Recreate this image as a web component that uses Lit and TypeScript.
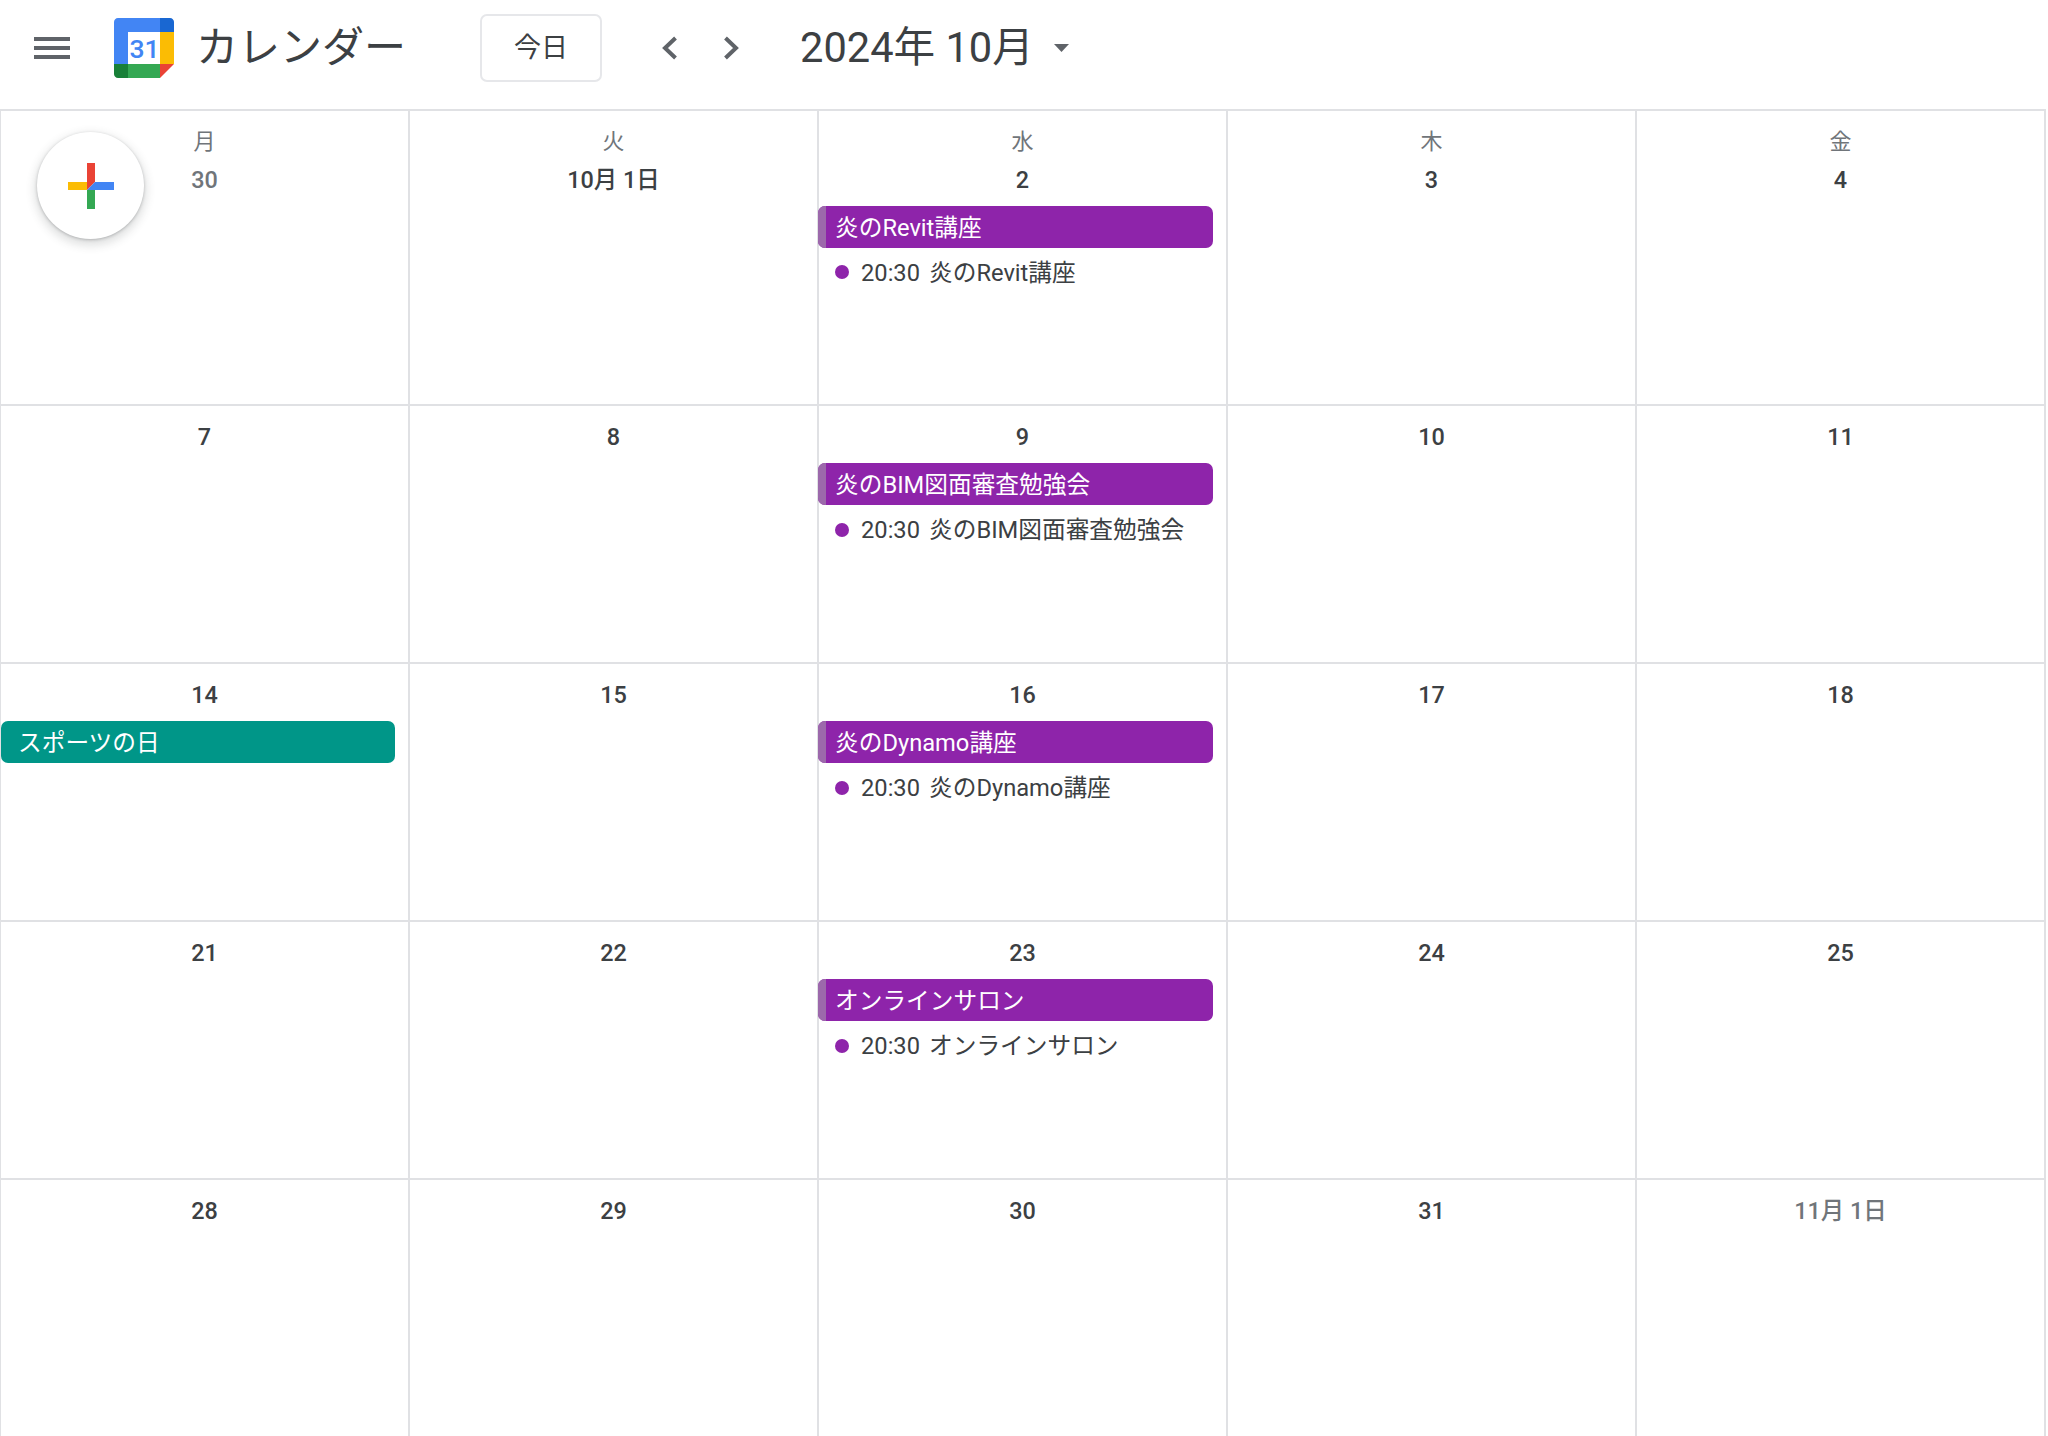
import { LitElement, html, css } from "lit";
import { customElement } from "lit/decorators.js";

type Day = { label: string; tone?: "muted"; bar?: string; holiday?: string };

const rows: Day[][] = [
  [{ label: "30", tone: "muted" }, { label: "10月 1日" }, { label: "2", bar: "炎のRevit講座" }, { label: "3" }, { label: "4" }],
  [{ label: "7" }, { label: "8" }, { label: "9", bar: "炎のBIM図面審査勉強会" }, { label: "10" }, { label: "11" }],
  [{ label: "14", holiday: "スポーツの日" }, { label: "15" }, { label: "16", bar: "炎のDynamo講座" }, { label: "17" }, { label: "18" }],
  [{ label: "21" }, { label: "22" }, { label: "23", bar: "オンラインサロン" }, { label: "24" }, { label: "25" }],
  [{ label: "28" }, { label: "29" }, { label: "30" }, { label: "31" }, { label: "11月 1日", tone: "muted" }],
];
const dow = ["月", "火", "水", "木", "金"];

@customElement("app-root")
export class AppRoot extends LitElement {
  static styles = css`
    :host { display: block; width: 2048px; height: 1436px; overflow: hidden; background: #fff; position: relative; font-family: Roboto, 'Noto Sans CJK JP', sans-serif; color: #3c4043; }
    .top { height: 109px; display: flex; align-items: center; box-sizing: border-box; padding: 0 0 14px 34px; }
    .menu { width: 36px; height: 36px; display: block; }
    .logo { width: 60px; height: 60px; margin-left: 44px; display: block; }
    .brand { font-size: 42px; line-height: 48px; margin-left: 22px; width: 245px; white-space: nowrap; }
    .today { width: 122px; height: 68px; box-sizing: border-box; border: 2px solid #e6e7ea; border-radius: 7px; display: flex; align-items: center; justify-content: center; font-size: 27px; padding-bottom: 4px; margin-left: 39px; }
    .nav { display: block; width: 30px; height: 30px; }
    .prev { margin-left: 53px; }
    .next { margin-left: 31px; }
    .period { font-size: 41.6px; line-height: 48px; margin-left: 54px; white-space: nowrap; }
    .caret { display: block; width: 15px; height: 8px; margin-left: 20px; }
    .grid { display: grid; grid-template-columns: repeat(5, 409px); grid-template-rows: 295px 258px 258px 258px 262px; border-top: 2px solid #e0e1e4; border-left: 1px solid #e0e1e4; width: 2046px; box-sizing: border-box; }
    .cell { border-right: 2px solid #e0e1e4; border-bottom: 2px solid #e0e1e4; box-sizing: border-box; display: flex; flex-direction: column; padding-top: 14.5px; min-width: 0; }
    .cell.first { padding-top: 17px; }
    .dow { font-size: 22px; line-height: 28px; text-align: center; color: #70757a; margin-bottom: 7.5px; }
    .num { font-size: 23.4px; line-height: 32px; text-align: center; font-weight: 500; }
    .num.muted { color: #70757a; }
    .bar { height: 42px; margin: 10.5px 13px 0 0; border-radius: 7px; color: #fff; font-size: 23.7px; line-height: 44px; box-sizing: border-box; padding-left: 17px; position: relative; overflow: hidden; white-space: nowrap; }
    .first .bar { margin-top: 10px; }
    .bar.purple { background: #8e24aa; margin-left: -1px; }
    .bar.purple::before { content: ""; position: absolute; left: 0; top: 0; bottom: 0; width: 8px; background: #9c69ab; }
    .bar.green { background: #009688; }
    .timed { display: flex; align-items: center; height: 46px; font-size: 23.7px; padding-left: 16px; white-space: nowrap; }
    .dot { width: 14px; height: 14px; border-radius: 50%; background: #8e24aa; margin: 3px 12px 0 0; flex: none; }
    .time { margin-right: 9px; }
    .fab { position: absolute; left: 37px; top: 132px; width: 107px; height: 107px; border-radius: 50%; background: #fff; box-shadow: 0 1px 3px rgba(60,64,67,.3), 0 4px 8px 3px rgba(60,64,67,.15); display: flex; align-items: center; justify-content: center; }
    .fab svg { width: 46px; height: 46px; display: block; }
  `;

  private logo() {
    return html`<svg class="logo" viewBox="0 0 60 60" aria-hidden="true">
      <path d="M14 46V14h32v32z" fill="#fff"/>
      <path d="M46 60l14-14H46z" fill="#ea4335"/>
      <path d="M60 14H46v32h14z" fill="#fbbc04"/>
      <path d="M46 46H14v14h32z" fill="#34a853"/>
      <path d="M0 46v10c0 2.2 1.8 4 4 4h10V46z" fill="#188038"/>
      <path d="M60 14V4c0-2.2-1.8-4-4-4H46v14z" fill="#1967d2"/>
      <path d="M46 0H4C1.8 0 0 1.8 0 4v42h14V14h32z" fill="#4285f4"/>
      <text x="30.5" y="40" text-anchor="middle" font-size="26.5" font-weight="500" fill="#4285f4" font-family="Roboto, sans-serif">31</text>
    </svg>`;
  }

  private cell(d: Day, r: number, c: number) {
    return html`<div class="cell ${r === 0 ? "first" : ""}">
      ${r === 0 ? html`<div class="dow">${dow[c]}</div>` : ""}
      <div class="num ${d.tone === "muted" ? "muted" : ""}">${d.label}</div>
      ${d.holiday ? html`<div class="bar green">${d.holiday}</div>` : ""}
      ${d.bar ? html`<div class="bar purple">${d.bar}</div>
        <div class="timed"><span class="dot"></span><span><span class="time">20:30</span>${d.bar}</span></div>` : ""}
    </div>`;
  }

  render() {
    return html`
      <div class="top">
        <svg class="menu" viewBox="0 0 36 36" aria-hidden="true"><path d="M0 7h36v4H0zM0 16h36v4H0zM0 25h36v4H0z" fill="#5f6368"/></svg>
        ${this.logo()}
        <div class="brand">カレンダー</div>
        <div class="today">今日</div>
        <svg class="nav prev" viewBox="0 0 30 30" aria-hidden="true"><path d="M20.5 5 10 15l10.5 10" fill="none" stroke="#5f6368" stroke-width="4"/></svg>
        <svg class="nav next" viewBox="0 0 30 30" aria-hidden="true"><path d="M9.5 5 20 15 9.5 25" fill="none" stroke="#5f6368" stroke-width="4"/></svg>
        <div class="period">2024年 10月</div>
        <svg class="caret" viewBox="0 0 15 8" aria-hidden="true"><path d="M0 0h15L7.5 8z" fill="#5f6368"/></svg>
      </div>
      <div class="grid">
        ${rows.map((row, r) => row.map((d, c) => this.cell(d, r, c)))}
      </div>
      <div class="fab">
        <svg viewBox="0 0 46 46" aria-hidden="true">
          <path d="M19 0h8v19l-8 8z" fill="#ea4335"/>
          <path d="M27 19h19v8H19z" fill="#4285f4"/>
          <path d="M19 27h8v19h-8z" fill="#34a853"/>
          <path d="M0 19h19v8H0z" fill="#fbbc04"/>
        </svg>
      </div>
    `;
  }
}
